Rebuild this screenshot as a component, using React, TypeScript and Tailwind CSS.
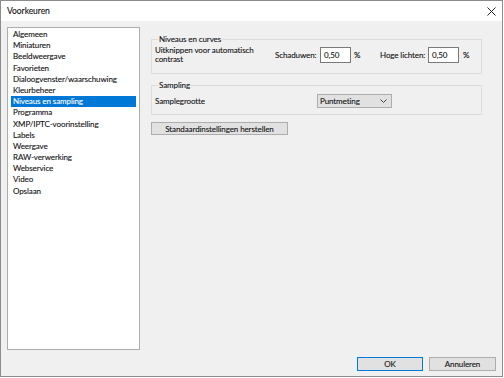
import React from "react";

const items = [
  "Algemeen",
  "Miniaturen",
  "Beeldweergave",
  "Favorieten",
  "Dialoogvenster/waarschuwing",
  "Kleurbeheer",
  "Niveaus en sampling",
  "Programma",
  "XMP/IPTC-voorinstelling",
  "Labels",
  "Weergave",
  "RAW-verwerking",
  "Webservice",
  "Video",
  "Opslaan",
];

export default function App() {
  return (
    <div
      className="w-[504px] h-[378px] bg-white text-[8px] tracking-[-0.1px] text-[#111] [-webkit-text-stroke:0.1px_currentColor]"
      style={{ fontFamily: 'Lato, "Noto Sans", sans-serif' }}
    >
      <div className="w-[503px] h-[377px] border border-[#8c8c8c] flex flex-col bg-[#f0f0f0]">
        <div className="h-[20px] shrink-0 bg-white flex items-center justify-between pl-[6px] pr-[6px]">
          <span className="text-[8.6px]">Voorkeuren</span>
          <svg width="9" height="9" viewBox="0 0 9 9">
            <path d="M0.5 0.5 L8.5 8.5 M8.5 0.5 L0.5 8.5" stroke="#222" strokeWidth="1" />
          </svg>
        </div>
        <div className="flex-1 flex flex-col">
          <div className="flex pt-[6px] pl-[6px]">
            <div className="w-[133px] h-[323px] bg-white border border-[#adadad] pt-[1px] px-[3px]">
              {items.map((it) => (
                <div
                  key={it}
                  className={
                    "h-[11.2px] leading-[11.2px] pl-[2px] whitespace-nowrap " +
                    (it === "Niveaus en sampling" ? "bg-[#0078d7] text-white" : "")
                  }
                >
                  {it}
                </div>
              ))}
            </div>
            <div className="ml-[11px] w-[331px] mt-[6px] flex flex-col">
              <fieldset className="border border-[#dcdcdc] pl-[3px] pt-[2px] pb-[10px]">
                <legend className="ml-[3px] px-[1px] leading-[12px]">Niveaus en curves</legend>
                <div className="flex items-center h-[16px] whitespace-nowrap">
                  <div className="w-[120px] shrink-0 leading-[9.5px]">
                    Uitknippen voor automatisch
                    <br />
                    contrast
                  </div>
                  <div className="w-[45px] shrink-0">Schaduwen:</div>
                  <div className="w-[31px] shrink-0 h-[16px] bg-white border border-[#7a7a7a] pl-[3px] leading-[14px]">0,50</div>
                  <div className="w-[29px] shrink-0 pl-[3px]">%</div>
                  <div className="w-[48px] shrink-0">Hoge lichten:</div>
                  <div className="w-[31px] shrink-0 h-[16px] bg-white border border-[#7a7a7a] pl-[3px] leading-[14px]">0,50</div>
                  <div className="pl-[4px]">%</div>
                </div>
              </fieldset>
              <fieldset className="mt-[5px] border border-[#dcdcdc] pl-[3px] pt-[3px] pb-[6px]">
                <legend className="ml-[3px] px-[1px] leading-[12px]">Sampling</legend>
                <div className="flex items-center h-[14px] whitespace-nowrap">
                  <div className="w-[162px] shrink-0">Samplegrootte</div>
                  <div className="w-[75px] shrink-0 h-[14px] bg-[#e1e1e1] border border-[#adadad] flex items-center justify-between pl-[2px] pr-[4px]">
                    <span>Puntmeting</span>
                    <svg width="7" height="4" viewBox="0 0 7 4">
                      <path d="M0.5 0.5 L3.5 3.5 L6.5 0.5" fill="none" stroke="#444" strokeWidth="1" />
                    </svg>
                  </div>
                </div>
              </fieldset>
              <div className="mt-[7px] w-[137px] h-[13px] bg-[#e1e1e1] border border-[#adadad] flex items-center justify-center whitespace-nowrap">
                Standaardinstellingen herstellen
              </div>
            </div>
          </div>
          <div className="flex justify-end gap-[6px] pr-[6px] mt-[7px]">
            <div className="w-[66px] h-[14px] bg-[#e1e1e1] border border-[#0078d7] flex items-center justify-center">OK</div>
            <div className="w-[67px] h-[14px] bg-[#e1e1e1] border border-[#adadad] flex items-center justify-center">Annuleren</div>
          </div>
        </div>
      </div>
    </div>
  );
}
